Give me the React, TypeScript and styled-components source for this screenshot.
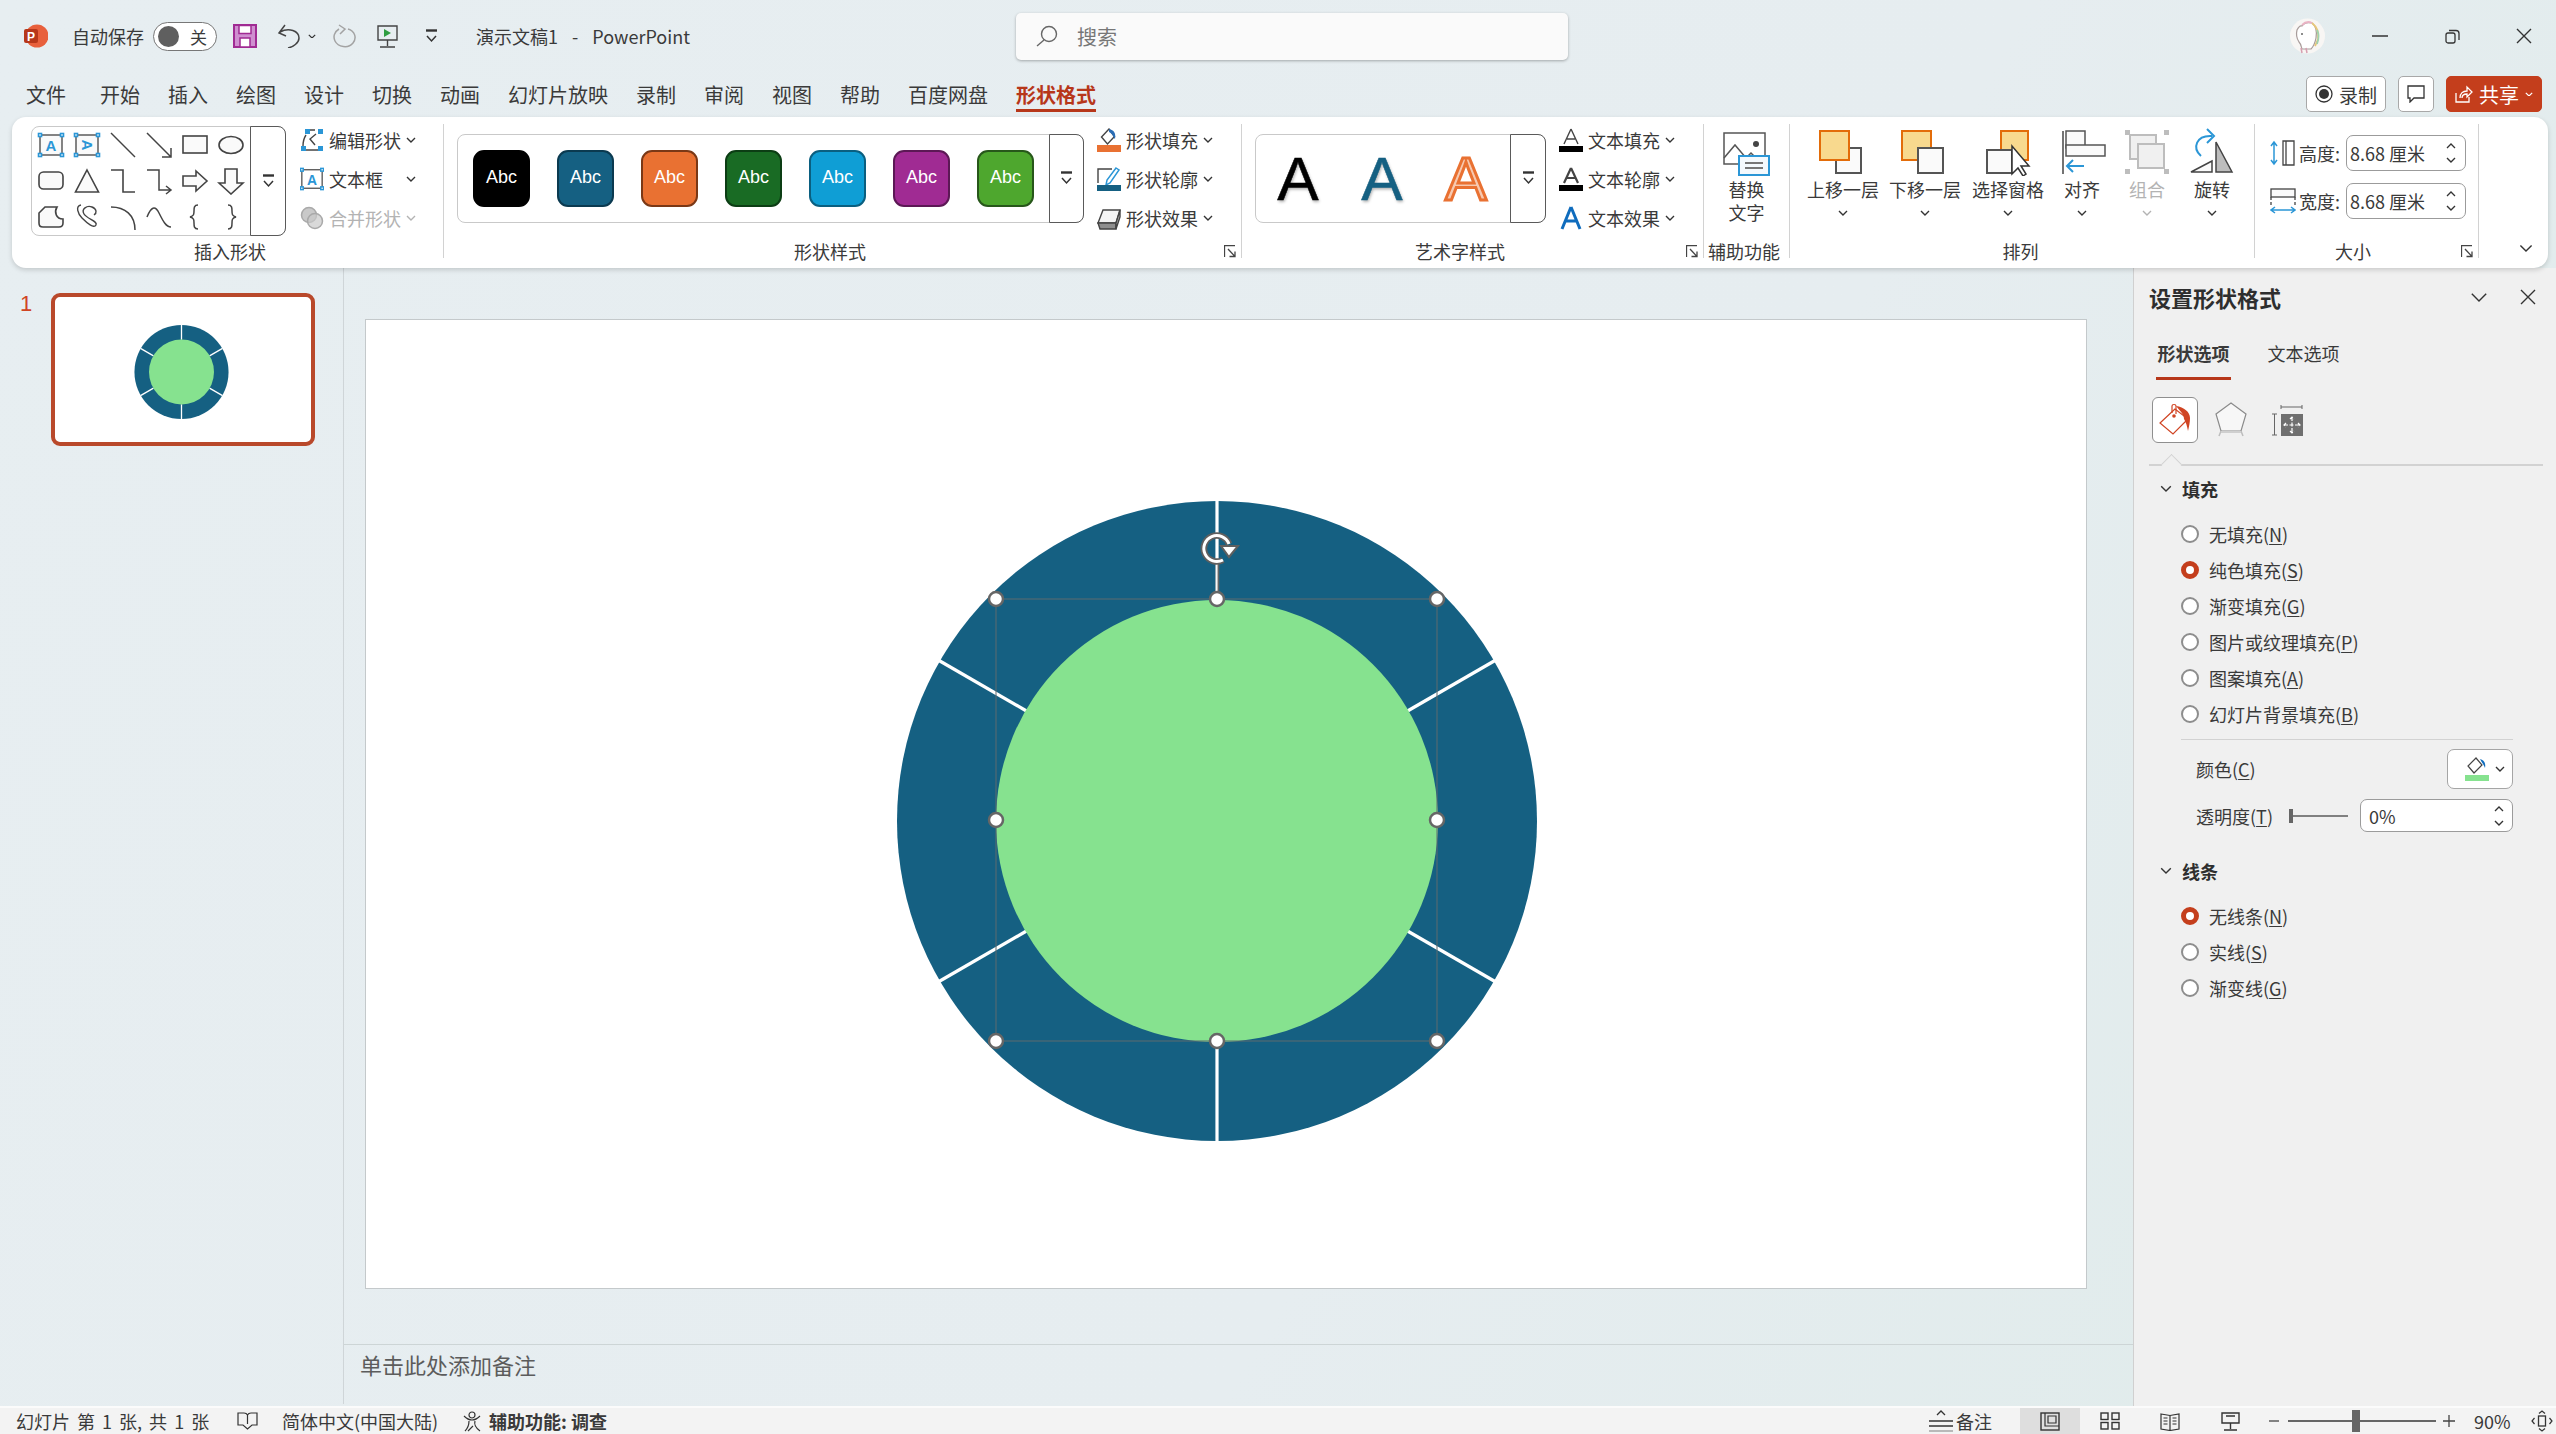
import React from 'react'
import styled, { createGlobalStyle } from 'styled-components'

const FONT = `"Noto Sans CJK SC", "Liberation Sans", sans-serif`
const INK = '#3a3a3a'
const RED = '#c43e1c'

const Global = createGlobalStyle`
  html, body { margin: 0; padding: 0; overflow: hidden; background: #e6edf0; }
  * { box-sizing: border-box; }
  svg { display: block; flex: none; }
`
const Root = styled.div`
  width: 2556px;
  height: 1434px;
  overflow: hidden;
  display: grid;
  grid-template-rows: 72px 45px 151px 1fr 28px;
  background: linear-gradient(120deg, #e7eef1 0%, #e6edf0 60%, #dfebea 100%);
  font-family: ${FONT};
  font-size: 18px;
  color: ${INK};
`

/* title bar */
const TitleBar = styled.div`
  display: grid;
  grid-template-columns: 1016px 552px 1fr;
  align-items: center;
`
const QuickBar = styled.div`
  display: flex;
  align-items: center;
  padding-left: 24px;
`
const Spot = styled.span<{ $ml?: number }>`
  display: flex;
  align-items: center;
  margin-left: ${p => p.$ml ?? 0}px;
  white-space: nowrap;
`
const DocTitle = styled.span`
  margin-left: 38px;
  white-space: pre;
  word-spacing: 3px;
`
const Toggle = styled.span`
  margin-left: 9px;
  width: 64px;
  height: 29px;
  border: 1px solid #777;
  border-radius: 15px;
  background: #fff;
  display: flex;
  align-items: center;
  justify-content: space-between;
  padding: 0 9px 0 4px;
  font-size: 17px;
  line-height: 1;
`
const Knob = styled.span`
  width: 21px;
  height: 21px;
  border-radius: 50%;
  background: #5f5f5f;
`
const SearchBox = styled.div`
  height: 47px;
  background: #fafafa;
  border-radius: 5px;
  box-shadow: 0 1px 3px rgba(0, 0, 0, 0.3);
  display: flex;
  align-items: center;
  gap: 19px;
  padding-left: 20px;
  font-size: 20px;
  color: #777;
`
const WindowBar = styled.div`
  display: flex;
  align-items: center;
  justify-content: flex-end;
  margin-right: -4px;
`
const Avatar = styled.span`
  margin-right: 18px;
`
const WinButton = styled.span`
  width: 72px;
  display: flex;
  justify-content: center;
`

/* tab row */
const TabRow = styled.div`
  display: flex;
  align-items: flex-start;
  gap: 28px;
  padding: 0 14px 0 26px;
`
const Tab = styled.span<{ $on?: boolean; $first?: boolean }>`
  padding-top: 8px;
  line-height: 29px;
  font-size: 20px;
  font-weight: ${p => (p.$on ? 700 : 400)};
  color: ${p => (p.$on ? '#b7371a' : INK)};
  border-bottom: 3px solid ${p => (p.$on ? '#b7371a' : 'transparent')};
  margin-right: ${p => (p.$first ? 6 : 0)}px;
`
const RightActions = styled.div`
  margin-left: auto;
  margin-top: 4px;
  display: flex;
  gap: 12px;
`
const ActionButton = styled.span<{ $w: number; $accent?: boolean }>`
  width: ${p => p.$w}px;
  height: 36px;
  display: flex;
  align-items: center;
  justify-content: center;
  gap: 6px;
  border-radius: 5px;
  border: 1px solid ${p => (p.$accent ? RED : '#a8a8a8')};
  background: ${p => (p.$accent ? RED : '#fff')};
  color: ${p => (p.$accent ? '#fff' : INK)};
  font-size: ${p => (p.$accent ? 20 : 19)}px;
`

/* ribbon */
const Ribbon = styled.div`
  margin: 0 8px 0 12px;
  height: 151px;
  background: #fff;
  border-radius: 14px;
  box-shadow: 0 2px 5px rgba(0, 0, 0, 0.16);
  display: flex;
  padding-top: 7px;
  position: relative;
  z-index: 2;
`
const Group = styled.div<{ $w: number }>`
  width: ${p => p.$w}px;
  display: flex;
  flex-direction: column;
`
const GroupBody = styled.div<{ $pl?: number; $pt?: number }>`
  height: 115px;
  display: flex;
  align-items: flex-start;
  padding: ${p => p.$pt ?? 0}px 0 0 ${p => p.$pl ?? 0}px;
`
const GroupFooter = styled.div`
  height: 24px;
  display: flex;
  align-items: center;
  padding-right: 5px;
`
const GroupLabel = styled.span<{ $pl?: number; $pr?: number }>`
  flex: 1;
  text-align: center;
  line-height: 24px;
  white-space: nowrap;
  padding: 0 ${p => p.$pr ?? 0}px 0 ${p => p.$pl ?? 0}px;
`
const GroupRule = styled.div`
  width: 1px;
  height: 134px;
  flex: none;
  background: #d2d2d2;
`
const Gallery = styled.div<{ $w: number; $h: number }>`
  width: ${p => p.$w}px;
  height: ${p => p.$h}px;
  flex: none;
  display: flex;
  border: 1px solid #c9c9c9;
  border-radius: 8px;
`
const GalleryItems = styled.div`
  flex: 1;
  display: flex;
  min-width: 0;
`
const ShapeGrid = styled.div`
  flex: 1;
  display: grid;
  grid-template-columns: repeat(6, 36px);
  grid-auto-rows: 36px;
  justify-items: center;
  align-items: center;
  align-content: center;
  padding-left: 1px;
`
const MoreColumn = styled.div<{ $w: number }>`
  width: ${p => p.$w}px;
  flex: none;
  display: flex;
  align-items: center;
  justify-content: center;
  border: 1px solid #5a5a5a;
  margin: -1px -1px -1px 0;
  border-radius: 0 8px 8px 0;
  background: #fff;
`
const SwatchRow = styled.div`
  display: flex;
  gap: 27px;
  padding: 15px 0 0 15px;
`
const Swatch = styled.div<{ $bg: string; $edge: string }>`
  width: 57px;
  height: 57px;
  border-radius: 11px;
  background: ${p => p.$bg};
  border: 2px solid ${p => p.$edge};
  display: flex;
  align-items: center;
  justify-content: center;
  color: #fff;
  font-family: 'Liberation Sans', sans-serif;
  font-size: 18px;
  padding-bottom: 2px;
`
const ArtCell = styled.div<{ $art: 'black' | 'blue' | 'orange' }>`
  width: 84px;
  height: 87px;
  display: flex;
  align-items: center;
  justify-content: center;
  font-family: 'Liberation Sans', sans-serif;
  font-size: 62px;
  line-height: 1;
  color: ${p => (p.$art === 'black' ? '#000' : p.$art === 'blue' ? '#156082' : '#f7c9b0')};
  text-shadow: ${p => (p.$art === 'orange' ? 'none' : '1px 2px 3px rgba(0,0,0,.3)')};
  -webkit-text-stroke: ${p => (p.$art === 'orange' ? '3px #e97132' : '0.5px currentColor')};
`
const SideColumn = styled.div<{ $ml: number; $mt: number }>`
  margin: ${p => p.$mt}px 0 0 ${p => p.$ml}px;
  display: flex;
  flex-direction: column;
  gap: 7px;
`
const SideRow = styled.div<{ $off?: boolean }>`
  height: 32px;
  display: flex;
  align-items: center;
  gap: 5px;
  color: ${p => (p.$off ? '#b3b3b3' : INK)};
  white-space: nowrap;
`
const SideLabel = styled.span`
  width: 72px;
`
const BigButton = styled.div<{ $w: number; $off?: boolean }>`
  width: ${p => p.$w}px;
  flex: none;
  display: flex;
  flex-direction: column;
  align-items: center;
  padding-top: 4px;
  color: ${p => (p.$off ? '#b3b3b3' : INK)};
`
const BigLabel = styled.span`
  margin-top: 2px;
  line-height: 23px;
  text-align: center;
  white-space: nowrap;
`
const BigChevron = styled.span`
  margin-top: 9px;
`
const SizeStack = styled.div`
  display: flex;
  flex-direction: column;
  gap: 12px;
  padding: 11px 0 0 15px;
`
const SizeRow = styled.div`
  height: 36px;
  display: flex;
  align-items: center;
`
const SizeLabel = styled.span`
  width: 50px;
  padding-left: 3px;
  white-space: nowrap;
`
const Spinner = styled.div<{ $w: number; $h: number; $ml?: number; $px?: number }>`
  width: ${p => p.$w}px;
  height: ${p => p.$h}px;
  margin-left: ${p => p.$ml ?? 0}px;
  flex: none;
  display: flex;
  align-items: center;
  justify-content: space-between;
  background: #fff;
  border: 1px solid #9b9b9b;
  border-radius: 7px;
  padding: 0 ${p => p.$px ?? 9}px 0 ${p => p.$px ?? 3}px;
  white-space: nowrap;
`
const SpinArrows = styled.span`
  display: flex;
  flex-direction: column;
  gap: 8px;
`
const CollapseSlot = styled.div`
  flex: 1;
  padding: 120px 0 0 40px;
`

/* main area */
const Main = styled.div`
  display: grid;
  grid-template-columns: 344px 1fr 423px;
  min-height: 0;
`
const ThumbPane = styled.div`
  border-right: 1px solid #cfd5d8;
  display: flex;
  align-items: flex-start;
  padding: 25px 0 0 20px;
  margin-bottom: 2px;
`
const ThumbNumber = styled.span`
  width: 31px;
  font-family: 'Liberation Sans', sans-serif;
  font-size: 22px;
  line-height: 22px;
  color: #d04423;
`
const Thumb = styled.div`
  width: 264px;
  height: 153px;
  border: 4px solid #b9492b;
  border-radius: 9px;
  background: #fff;
  overflow: hidden;
`
const Center = styled.div`
  display: flex;
  flex-direction: column;
  min-width: 0;
`
const SlideArea = styled.div`
  flex: 1;
  padding: 51px 0 0 21px;
`
const Slide = styled.div`
  width: 1722px;
  height: 970px;
  background: #fff;
  border: 1px solid #c4c9cb;
`
const NotesBar = styled.div`
  height: 62px;
  border-top: 1px solid #cdd5d6;
  padding: 5px 0 0 16px;
  font-size: 22px;
  line-height: 28px;
  color: #5c5c5c;
`

/* format panel */
const Panel = styled.div`
  background: #f0f0f0;
  border-left: 1px solid #d0d0d0;
  padding-left: 15px;
  margin-bottom: -2px;
`
const PanelHead = styled.div`
  height: 60px;
  display: flex;
  align-items: center;
  padding: 0 20px 2px 0;
  gap: 32px;
`
const PanelTitle = styled.span`
  font-size: 22px;
  font-weight: 700;
  color: #2e2e2e;
  margin-right: auto;
`
const PanelTabs = styled.div`
  height: 52px;
  display: flex;
  gap: 35px;
  padding-left: 7px;
`
const PanelTab = styled.span<{ $on?: boolean }>`
  width: 75px;
  text-align: center;
  line-height: 50px;
  height: 52px;
  white-space: nowrap;
  font-weight: ${p => (p.$on ? 700 : 400)};
  border-bottom: 3px solid ${p => (p.$on ? '#b7371a' : 'transparent')};
`
const PaneIcons = styled.div`
  display: flex;
  gap: 10px;
  margin: 17px 0 0 3px;
`
const PaneIcon = styled.span<{ $on?: boolean }>`
  width: 46px;
  height: 46px;
  display: flex;
  align-items: center;
  justify-content: center;
  border-radius: 6px;
  border: 1px solid ${p => (p.$on ? '#8f8f8f' : 'transparent')};
  background: ${p => (p.$on ? '#fff' : 'transparent')};
`
const PaneRule = styled.div`
  position: relative;
  width: 394px;
  height: 2px;
  margin-top: 21px;
  background: #d2d2d2;
  &::before {
    content: '';
    position: absolute;
    left: 15px;
    top: -7px;
    width: 14px;
    height: 14px;
    background: #f0f0f0;
    border-left: 1px solid #d2d2d2;
    border-top: 1px solid #d2d2d2;
    transform: rotate(45deg);
  }
`
const SectionHead = styled.div<{ $mt?: number }>`
  height: 46px;
  margin-top: ${p => p.$mt ?? 0}px;
  display: flex;
  align-items: center;
  gap: 10px;
  padding: 0 0 1px 11px;
  font-weight: 700;
  color: #2e2e2e;
`
const RadioList = styled.div`
  margin-top: 4px;
`
const RadioRow = styled.div`
  height: 36px;
  display: flex;
  align-items: center;
  gap: 10px;
  padding-left: 32px;
`
const Radio = styled.span<{ $on?: boolean }>`
  width: 18px;
  height: 18px;
  border-radius: 50%;
  background: #fff;
  border: ${p => (p.$on ? `5px solid ${RED}` : '2px solid #8d8d8d')};
`
const Key = styled.u`
  text-underline-offset: 2px;
`
const ThinRule = styled.div`
  width: 332px;
  height: 1px;
  margin: 7px 0 0 32px;
  background: #d2d2d2;
`
const PropRow = styled.div<{ $mt: number; $h: number }>`
  width: 364px;
  height: ${p => p.$h}px;
  margin-top: ${p => p.$mt}px;
  display: flex;
  align-items: center;
  padding-left: 47px;
`
const PropLabel = styled.span<{ $w?: number }>`
  width: ${p => (p.$w ? `${p.$w}px` : 'auto')};
  margin-right: auto;
  white-space: nowrap;
`
const ColorButton = styled.span`
  width: 66px;
  height: 40px;
  background: #fff;
  border: 1px solid #a5a5a5;
  border-radius: 7px;
  display: flex;
  align-items: center;
  justify-content: flex-end;
  gap: 6px;
  padding-right: 7px;
`

/* status bar */
const StatusBar = styled.div`
  display: flex;
  align-items: stretch;
  background: #f3f3f3;
  border-top: 2px solid #fbfbfb;
  padding: 0 2px 0 16px;
  position: relative;
  z-index: 1;
`
const Cell = styled.span<{ $w?: number; $ml?: number; $bold?: boolean; $on?: boolean; $center?: boolean; $wide?: boolean }>`
  width: ${p => (p.$w ? `${p.$w}px` : 'auto')};
  margin-left: ${p => (p.$ml === -1 ? 'auto' : `${p.$ml ?? 0}px`)};
  display: flex;
  align-items: center;
  justify-content: ${p => (p.$center ? 'center' : 'flex-start')};
  gap: 3px;
  font-weight: ${p => (p.$bold ? 700 : 400)};
  background: ${p => (p.$on ? '#dedede' : 'transparent')};
  white-space: nowrap;
  word-spacing: ${p => (p.$wide ? 3 : 0)}px;
  line-height: 1;
`
const ZoomTrack = styled.span`
  position: relative;
  width: 148px;
  height: 2px;
  background: #666;
  align-self: center;
  margin-left: 4px;
`
const ZoomThumb = styled.span`
  position: absolute;
  left: 64px;
  top: -10px;
  width: 8px;
  height: 22px;
  background: #666;
`

/* icons */
const S = '#444'
const BLUE = '#2b96d6'

const Chevron = ({ color = '#333', w = 10 }: { color?: string; w?: number }) => (
  <svg width={w} height={w * 0.6} viewBox="0 0 10 6">
    <path d="M1 1l4 4 4-4" fill="none" stroke={color} strokeWidth={Math.min(1.5, 14 / w)} />
  </svg>
)
const ChevronUp = () => (
  <svg width="10" height="6" viewBox="0 0 10 6">
    <path d="M1 5l4-4 4 4" fill="none" stroke="#333" strokeWidth="1.3" />
  </svg>
)
const MoreIcon = () => (
  <svg width="13" height="15" viewBox="0 0 13 15">
    <path d="M1 1.500h11" stroke="#333" strokeWidth="2.400" />
    <path d="M2 7l4.500 5L11 7" fill="none" stroke="#333" strokeWidth="1.500" />
  </svg>
)
const Launcher = () => (
  <svg width="12" height="13" viewBox="0 0 12 13">
    <path d="M.5 12V.5H11M4 4l7 7.500M11 6.500v5H5.500" fill="none" stroke="#444" strokeWidth="1.300" />
  </svg>
)
const Corners = ({ a = 3, b = 25, t = 4, d = 24 }: { a?: number; b?: number; t?: number; d?: number }) => (
  <g fill="#fff" stroke={BLUE} strokeWidth="1.600">
    <rect x={a - 1.5} y={t - 1.5} width="3" height="3" />
    <rect x={b - 1.5} y={t - 1.5} width="3" height="3" />
    <rect x={a - 1.5} y={d - 1.5} width="3" height="3" />
    <rect x={b - 1.5} y={d - 1.5} width="3" height="3" />
  </g>
)
const TextBoxIcon = () => (
  <svg width="28" height="28" viewBox="0 0 28 28">
    <rect x="3" y="4" width="22" height="20" fill="#fafafa" stroke={S} strokeWidth="1.300" />
    <Corners />
    <text x="14" y="20" textAnchor="middle" fontFamily="Liberation Sans" fontSize="15" fontWeight="700" fill={BLUE}>A</text>
  </svg>
)

const shapePaths: React.ReactNode[] = [
  <TextBoxIcon key="a" />,
  <svg key="b" width="28" height="28" viewBox="0 0 28 28">
    <rect x="3" y="4" width="22" height="20" fill="#fafafa" stroke={S} strokeWidth="1.300" />
    <Corners />
    <text x="14" y="-9" transform="rotate(90)" textAnchor="middle" fontFamily="Liberation Sans" fontSize="15" fontWeight="700" fill={BLUE}>A</text>
  </svg>,
  <svg key="c" width="28" height="28" viewBox="0 0 28 28"><path d="M2 2l24 24" stroke={S} strokeWidth="1.500" /></svg>,
  <svg key="d" width="28" height="28" viewBox="0 0 28 28"><path d="M2 2l24 24M26 17v9h-9" fill="none" stroke={S} strokeWidth="1.500" /></svg>,
  <svg key="e" width="28" height="28" viewBox="0 0 28 28"><rect x="2" y="5" width="24" height="17" fill="#fafafa" stroke={S} strokeWidth="1.600" /></svg>,
  <svg key="f" width="28" height="28" viewBox="0 0 28 28"><ellipse cx="14" cy="14" rx="12" ry="8.500" fill="#fafafa" stroke={S} strokeWidth="1.600" /></svg>,
  <svg key="g" width="28" height="28" viewBox="0 0 28 28"><rect x="2" y="5" width="24" height="17" rx="4.500" fill="#fafafa" stroke={S} strokeWidth="1.600" /></svg>,
  <svg key="h" width="28" height="28" viewBox="0 0 28 28"><path d="M14 3l11.500 22H2.500z" fill="#fafafa" stroke={S} strokeWidth="1.600" /></svg>,
  <svg key="i" width="28" height="28" viewBox="0 0 28 28"><path d="M2 3h12v22h12" fill="none" stroke={S} strokeWidth="1.600" /></svg>,
  <svg key="j" width="28" height="28" viewBox="0 0 28 28"><path d="M2 3h12v20h11M21 19l5 4-5 4" fill="none" stroke={S} strokeWidth="1.500" /></svg>,
  <svg key="k" width="28" height="28" viewBox="0 0 28 28"><path d="M2 9h13V4l11 10-11 10v-5H2z" fill="#fafafa" stroke={S} strokeWidth="1.600" /></svg>,
  <svg key="l" width="28" height="28" viewBox="0 0 28 28"><path d="M8 2h12v14h6L14 27 2 16h6z" fill="#fafafa" stroke={S} strokeWidth="1.600" /></svg>,
  <svg key="m" width="28" height="28" viewBox="0 0 28 28"><path d="M8 4h12c-3 5-1 12 6 12v4c0 3-1 4-4 4H6c-3 0-4-1-4-4V10z" fill="#fafafa" stroke={S} strokeWidth="1.600" /></svg>,
  <svg key="n" width="28" height="28" viewBox="0 0 28 28"><path d="M8 2C2 3 5 11 9 15c5 5 12 11 14 7s-9-6-12-11 3-9 8-7 5 6 2 8" fill="none" stroke={S} strokeWidth="1.400" /></svg>,
  <svg key="o" width="28" height="28" viewBox="0 0 28 28"><path d="M2 4c14 0 24 8 24 23" fill="none" stroke={S} strokeWidth="1.500" /></svg>,
  <svg key="p" width="28" height="28" viewBox="0 0 28 28"><path d="M2 14C6 4 10 2 14 10s7 14 12 14" fill="none" stroke={S} strokeWidth="1.500" /></svg>,
  <svg key="q" width="28" height="28" viewBox="0 0 28 28"><path d="M17 2c-4 0-4 3-4 6s0 5-4 6c4 1 4 3 4 6s0 6 4 6" fill="none" stroke={S} strokeWidth="1.500" /></svg>,
  <svg key="r" width="28" height="28" viewBox="0 0 28 28"><path d="M11 2c4 0 4 3 4 6s0 5 4 6c-4 1-4 3-4 6s0 6-4 6" fill="none" stroke={S} strokeWidth="1.500" /></svg>,
]

const EditShapeIcon = () => (
  <svg width="24" height="24" viewBox="0 0 24 24">
    <path d="M6 2h9M16 6l-6 5 5 6M3 18c0-5 1-8 3-11M5 22h14" fill="none" stroke={S} strokeWidth="1.400" />
    <g fill={BLUE}><rect x="1" y="18" width="5" height="5" /><rect x="18" y="18" width="5" height="5" /><rect x="18" y="1" width="5" height="5" /><rect x="5" y="1" width="5" height="5" /></g>
  </svg>
)
const MergeIcon = () => (
  <svg width="24" height="24" viewBox="0 0 24 24">
    <circle cx="9" cy="9" r="7.500" fill="#c9c9c9" stroke="#a9a9a9" strokeWidth="1.500" />
    <circle cx="15" cy="15" r="7.500" fill="#c9c9c9" fillOpacity=".7" stroke="#a9a9a9" strokeWidth="1.500" />
  </svg>
)
const FillIcon = ({ bar, accent = '#2a6db5' }: { bar: string; accent?: string }) => (
  <svg width="24" height="24" viewBox="0 0 24 24">
    <path d="M12 1l-7.500 8 6 7 7-7.500z" fill="#fff" stroke={S} strokeWidth="1.400" />
    <path d="M12 1c5 1 7 4 6 10-2-2-2-5-6-7z" fill={accent} />
    <rect x="0" y="17" width="24" height="7" fill={bar} />
  </svg>
)
const OutlineIcon = () => (
  <svg width="24" height="24" viewBox="0 0 24 24">
    <path d="M1 16V2h14" fill="none" stroke={S} strokeWidth="1.400" />
    <path d="M19 1l3 2-9 13-4 2 1-5z" fill="#fff" stroke={BLUE} strokeWidth="1.500" />
    <rect x="0" y="18" width="24" height="6" fill="#156082" />
  </svg>
)
const EffectIcon = () => (
  <svg width="24" height="24" viewBox="0 0 24 24">
    <path d="M6 4h17l-4 13H1z" fill="#f4f4f4" stroke={S} strokeWidth="1.400" />
    <path d="M1 17h18v6H3z" fill="#8f8f8f" stroke={S} strokeWidth="1.400" />
    <path d="M19 17l4-13v7l-4 12z" fill="#bdbdbd" stroke={S} strokeWidth="1.400" />
  </svg>
)
const LetterIcon = ({ mode }: { mode: 'fill' | 'line' | 'glow' }) => (
  <svg width="24" height="24" viewBox="0 0 24 24">
    {mode === 'glow' ? (
      <path d="M12 1L3 23M12 1l9 22M6 15h12" fill="none" stroke="#0f6cbd" strokeWidth="3" />
    ) : (
      <>
        <path d="M12 1L5 16M12 1l7 15M8 11h8" fill="none" stroke={S} strokeWidth={mode === 'line' ? 2.2 : 1.4} />
        <rect x="0" y="18" width="24" height="6" fill="#000" />
      </>
    )}
  </svg>
)
const AltTextIcon = () => (
  <svg width="48" height="44" viewBox="0 0 48 44">
    <rect x="1" y="1" width="41" height="31" fill="#fff" stroke="#555" strokeWidth="1.500" />
    <path d="M1 26l11-13 11 13 5-5 5 5" fill="none" stroke="#555" strokeWidth="1.500" />
    <circle cx="33" cy="12" r="3" fill="#444" />
    <rect x="16" y="24" width="30" height="19" fill="#f4f9fd" stroke={BLUE} strokeWidth="2" />
    <path d="M22 31h18M22 36h18" stroke="#777" strokeWidth="2" />
  </svg>
)
const LayerIcon = ({ kind }: { kind: 'up' | 'down' }) => (
  <svg width="48" height="48" viewBox="0 0 48 48">
    {kind === 'up' ? (
      <>
        <path d="M17 20h25v25H17z" fill="#fafafa" stroke="#555" strokeWidth="2" />
        <rect x="1" y="3" width="29" height="29" fill="#f8d98e" stroke="#e36c09" strokeWidth="2" />
      </>
    ) : (
      <>
        <rect x="1" y="3" width="29" height="29" fill="#f8d98e" stroke="#e36c09" strokeWidth="2" />
        <path d="M17 20h25v25H17z" fill="#fafafa" stroke="#555" strokeWidth="2" />
      </>
    )}
  </svg>
)
const PaneIconArt = () => (
  <svg width="48" height="48" viewBox="0 0 48 48">
    <rect x="17" y="3" width="27" height="29" fill="#f8d98e" stroke="#e36c09" strokeWidth="2" />
    <rect x="3" y="22" width="25" height="23" fill="#fafafa" stroke="#555" strokeWidth="2" />
    <path d="M28 18v28l6-6 5 8 3-2-5-8h8z" fill="#fff" stroke="#333" strokeWidth="1.500" />
  </svg>
)
const AlignIcon = () => (
  <svg width="48" height="48" viewBox="0 0 48 48">
    <path d="M5 3v43" stroke="#444" strokeWidth="1.500" />
    <rect x="8" y="3" width="19" height="17" fill="#fafafa" stroke="#555" strokeWidth="1.500" />
    <rect x="8" y="17" width="39" height="11" fill="#fafafa" stroke="#555" strokeWidth="1.500" />
    <path d="M26 38H9M15 32l-6 6 6 6" fill="none" stroke={BLUE} strokeWidth="2" />
  </svg>
)
const GroupIcon = () => (
  <svg width="48" height="48" viewBox="0 0 48 48">
    <rect x="7" y="7" width="26" height="24" fill="#f0f0f0" stroke="#bdbdbd" strokeWidth="2" />
    <rect x="15" y="16" width="26" height="24" fill="#f0f0f0" stroke="#bdbdbd" strokeWidth="2" />
    <g fill="#bdbdbd"><rect x="2" y="2" width="5" height="5" /><rect x="41" y="2" width="5" height="5" /><rect x="2" y="41" width="5" height="5" /><rect x="41" y="41" width="5" height="5" /></g>
  </svg>
)
const RotateIcon = () => (
  <svg width="48" height="48" viewBox="0 0 48 48">
    <path d="M24 33L3 44h21z" fill="#fafafa" stroke="#444" strokeWidth="1.500" />
    <path d="M28 14v30h16z" fill="#bdbdbd" stroke="#444" strokeWidth="1.500" />
    <path d="M13 28C4 20 8 7 24 8M19 1l7 7-7 7" fill="none" stroke={BLUE} strokeWidth="2" />
  </svg>
)
const HeightIcon = () => (
  <svg width="26" height="26" viewBox="0 0 26 26">
    <path d="M4 2v22M1 6l3-4 3 4M1 20l3 4 3-4" fill="none" stroke={BLUE} strokeWidth="1.500" />
    <path d="M16 1h-3v24h3M16 1h8v24h-8zM13 6v15" fill="#fff" stroke="#444" strokeWidth="1.300" />
  </svg>
)
const WidthIcon = () => (
  <svg width="26" height="26" viewBox="0 0 26 26">
    <rect x="1" y="1" width="24" height="8" fill="#fafafa" stroke="#444" strokeWidth="1.300" />
    <path d="M1 9v9M25 9v9" stroke="#444" strokeWidth="1.300" strokeDasharray="3 2" />
    <path d="M1 22h24M5 19l-4 3 4 3M21 19l4 3-4 3" fill="none" stroke={BLUE} strokeWidth="1.500" />
  </svg>
)

const spokes = [0, 60, 120, 180, 240, 300]
const Donut = ({ scale }: { scale: number }) => (
  <>
    <circle r={320 * scale} fill="#156082" />
    {spokes.map(a => (
      <line
        key={a}
        x1="0"
        y1={-220 * scale}
        x2="0"
        y2={-322 * scale}
        stroke="#fff"
        strokeWidth={scale < 1 ? 1.3 : 3.2}
        transform={`rotate(${a})`}
      />
    ))}
    <circle r={221 * scale} fill="#86e28f" />
  </>
)

const handles: [number, number][] = [
  [996, 599], [1217, 599], [1437, 599], [996, 820], [1437, 820], [996, 1041], [1217, 1041], [1437, 1041],
]

const SlideArt = () => (
  <svg width="1720" height="968" viewBox="366 320 1720 968">
    <g transform="translate(1217 821)"><Donut scale={1} /></g>
    <rect x="996" y="599" width="441" height="442" fill="none" stroke="#5f6a6e" strokeWidth="1" />
    <path d="M1217.500 560v39" stroke="#666" strokeWidth="3.500" />
    <path d="M1216.800 560v39" stroke="#fff" strokeWidth="1.500" />
    <path d="M1229 544A13 13 0 1 0 1223 560" fill="none" stroke="#5f5f5f" strokeWidth="6.500" />
    <path d="M1229 544A13 13 0 1 0 1223 560" fill="none" stroke="#fff" strokeWidth="3" />
    <path d="M1221 546h17l-9 11z" fill="#fff" stroke="#5f5f5f" strokeWidth="2" />
    {handles.map(([x, y]) => (
      <circle key={`${x}-${y}`} cx={x} cy={y} r="7" fill="#fff" stroke="#666" strokeWidth="2.500" />
    ))}
  </svg>
)

const tabs = ['开始', '插入', '绘图', '设计', '切换', '动画', '幻灯片放映', '录制', '审阅', '视图', '帮助', '百度网盘']
const swatches: [string, string][] = [
  ['#000000', '#000000'],
  ['#156082', '#0b3a50'],
  ['#e97132', '#7a3816'],
  ['#196b24', '#0c3d14'],
  ['#0f9ed5', '#0a5f80'],
  ['#a02b93', '#5c1855'],
  ['#4ea72e', '#27571a'],
]
const arrange = [
  { label: '上移一层', w: 82, icon: <LayerIcon kind="up" /> },
  { label: '下移一层', w: 82, icon: <LayerIcon kind="down" /> },
  { label: '选择窗格', w: 84, icon: <PaneIconArt /> },
  { label: '对齐', w: 64, icon: <AlignIcon /> },
  { label: '组合', w: 66, icon: <GroupIcon />, off: true },
  { label: '旋转', w: 64, icon: <RotateIcon /> },
]
const fills: [string, string, boolean][] = [
  ['无填充', 'N', false],
  ['纯色填充', 'S', true],
  ['渐变填充', 'G', false],
  ['图片或纹理填充', 'P', false],
  ['图案填充', 'A', false],
  ['幻灯片背景填充', 'B', false],
]
const lines: [string, string, boolean][] = [
  ['无线条', 'N', true],
  ['实线', 'S', false],
  ['渐变线', 'G', false],
]

const RadioItem = ({ text, k, on }: { text: string; k: string; on: boolean }) => (
  <RadioRow>
    <Radio $on={on} />
    <span>
      {text}(<Key>{k}</Key>)
    </span>
  </RadioRow>
)

const SizeSpinner = () => (
  <Spinner $w={120} $h={36}>
    8.68 厘米
    <SpinArrows>
      <ChevronUp />
      <Chevron w={10} />
    </SpinArrows>
  </Spinner>
)

export default function App() {
  return (
    <Root>
      <Global />

      <TitleBar>
        <QuickBar>
          <svg width="24" height="24" viewBox="0 0 24 24">
            <circle cx="13" cy="12" r="11.500" fill="#e8603c" />
            <rect x="0" y="5" width="14" height="14" rx="2" fill="#b7371a" />
            <text x="7" y="16.500" textAnchor="middle" fontFamily="Liberation Sans" fontSize="12" fontWeight="700" fill="#fff">P</text>
          </svg>
          <Spot $ml={24}>自动保存</Spot>
          <Toggle>
            <Knob />关
          </Toggle>
          <Spot $ml={16}>
            <svg width="24" height="24" viewBox="0 0 24 24">
              <path d="M1 1h22v22H1z" fill="#cf8fd0" stroke="#a02b93" strokeWidth="2" />
              <rect x="6" y="1.500" width="12" height="8" fill="#fff" stroke="#a02b93" strokeWidth="1.500" />
              <rect x="7" y="14" width="10" height="9" fill="#fff" stroke="#a02b93" strokeWidth="1.500" />
            </svg>
          </Spot>
          <Spot $ml={20}>
            <svg width="24" height="24" viewBox="0 0 24 24">
              <path d="M8 1L2 9l7 3M3 8c9-5 19-1 19 6 0 5-6 9-11 10" fill="none" stroke="#444" strokeWidth="1.500" />
            </svg>
          </Spot>
          <Spot $ml={7}><Chevron w={8} /></Spot>
          <Spot $ml={16}>
            <svg width="25" height="24" viewBox="0 0 25 24">
              <path d="M7 1l6 4-5 5" fill="none" stroke="#a3a3a3" strokeWidth="1.500" />
              <path d="M7 5C2 8 1 13 3 17c3 6 13 8 18 2 4-5 2-12-5-14" fill="none" stroke="#a3a3a3" strokeWidth="1.500" />
            </svg>
          </Spot>
          <Spot $ml={20}>
            <svg width="21" height="24" viewBox="0 0 21 24">
              <path d="M1 2h19v14H1zM10.500 16v6M3 23h15" fill="none" stroke="#444" strokeWidth="1.400" />
              <path d="M7 5l7 4-7 4z" fill="#2e9e41" />
            </svg>
          </Spot>
          <Spot $ml={27}><MoreIcon /></Spot>
          <DocTitle>演示文稿1  -  PowerPoint</DocTitle>
        </QuickBar>
        <SearchBox>
          <svg width="22" height="22" viewBox="0 0 22 22">
            <circle cx="13" cy="9" r="7.500" fill="none" stroke="#666" strokeWidth="1.400" />
            <path d="M8 15l-7 6" stroke="#666" strokeWidth="1.400" />
          </svg>
          搜索
        </SearchBox>
        <WindowBar>
          <Avatar>
            <svg width="37" height="36" viewBox="0 0 37 36">
              <circle cx="18.500" cy="18" r="17.500" fill="#f8f6f4" />
              <path d="M8 12c1-2 3-5 5-4 2-3 6-4 10-3 4 3 5 9 4 15-1 5-3 9-5 11h-9c-1-3-1-5-3-7-2-3-3-8-2-12z" fill="#fff" stroke="#a89c9a" strokeWidth="1.200" />
              <path d="M23 5c5 4 7 10 6 16-1 3-2 5-3 7" fill="none" stroke="#e8c77a" strokeWidth="1.800" />
              <path d="M28 12c2 4 2 9 0 14" fill="none" stroke="#9ed3b0" strokeWidth="1.800" />
              <path d="M13 7c2-2 6-4 10-2" fill="none" stroke="#eab3c4" strokeWidth="1.800" />
              <path d="M12 30l1 5M17 30l1 5" stroke="#d79fb0" strokeWidth="1.500" />
              <circle cx="13" cy="16" r="1" fill="#666" />
            </svg>
          </Avatar>
          <WinButton>
            <svg width="16" height="2" viewBox="0 0 16 2"><path d="M0 1h16" stroke="#333" strokeWidth="1.500" /></svg>
          </WinButton>
          <WinButton>
            <svg width="15" height="15" viewBox="0 0 15 15">
              <rect x="1" y="4" width="9" height="10" rx="2" fill="none" stroke="#333" strokeWidth="1.300" />
              <path d="M4 1.500h7c2 0 3 1 3 3V11" fill="none" stroke="#333" strokeWidth="1.300" />
            </svg>
          </WinButton>
          <WinButton>
            <svg width="16" height="16" viewBox="0 0 16 16"><path d="M1 1l14 14M15 1L1 15" stroke="#333" strokeWidth="1.400" /></svg>
          </WinButton>
        </WindowBar>
      </TitleBar>

      <TabRow>
        <Tab $first>文件</Tab>
        {tabs.map(t => (
          <Tab key={t}>{t}</Tab>
        ))}
        <Tab $on>形状格式</Tab>
        <RightActions>
          <ActionButton $w={80}>
            <svg width="18" height="18" viewBox="0 0 18 18">
              <circle cx="9" cy="9" r="8" fill="none" stroke="#333" strokeWidth="1.300" />
              <circle cx="9" cy="9" r="5" fill="#333" />
            </svg>
            录制
          </ActionButton>
          <ActionButton $w={36}>
            <svg width="18" height="18" viewBox="0 0 18 18">
              <path d="M1 1h16v12H7l-4 4v-4H1z" fill="none" stroke="#333" strokeWidth="1.300" />
            </svg>
          </ActionButton>
          <ActionButton $w={96} $accent>
            <svg width="18" height="18" viewBox="0 0 18 18">
              <path d="M1 8v9h13v-5M5 13c0-5 3-7 7-7V2l5 5-5 5V9c-3 0-5 1-5 4" fill="none" stroke="#fff" strokeWidth="1.300" />
            </svg>
            共享
            <Chevron color="#fff" w={8} />
          </ActionButton>
        </RightActions>
      </TabRow>

      <Ribbon>
        <Group $w={431}>
          <GroupBody $pl={19} $pt={2}>
            <Gallery $w={255} $h={110}>
              <ShapeGrid>{shapePaths}</ShapeGrid>
              <MoreColumn $w={36}><MoreIcon /></MoreColumn>
            </Gallery>
            <SideColumn $ml={14} $mt={-2}>
              <SideRow><EditShapeIcon /><SideLabel>编辑形状</SideLabel><Chevron /></SideRow>
              <SideRow><svg width="24" height="24" viewBox="1 1 26 26"><rect x="3" y="4" width="22" height="20" fill="#fff" stroke={S} strokeWidth="1.300" /><Corners /><text x="14" y="20" textAnchor="middle" fontFamily="Liberation Sans" fontSize="15" fontWeight="700" fill={BLUE}>A</text></svg><SideLabel>文本框</SideLabel><Chevron /></SideRow>
              <SideRow $off><MergeIcon /><SideLabel>合并形状</SideLabel><Chevron color="#b3b3b3" /></SideRow>
            </SideColumn>
          </GroupBody>
          <GroupFooter><GroupLabel $pl={10}>插入形状</GroupLabel></GroupFooter>
        </Group>
        <GroupRule />

        <Group $w={797}>
          <GroupBody $pl={13} $pt={10}>
            <Gallery $w={627} $h={89}>
              <GalleryItems>
                <SwatchRow>
                  {swatches.map(([bg, edge]) => (
                    <Swatch key={bg} $bg={bg} $edge={edge}>Abc</Swatch>
                  ))}
                </SwatchRow>
              </GalleryItems>
              <MoreColumn $w={35}><MoreIcon /></MoreColumn>
            </Gallery>
            <SideColumn $ml={13} $mt={-10}>
              <SideRow><FillIcon bar="#e97132" /><SideLabel>形状填充</SideLabel><Chevron /></SideRow>
              <SideRow><OutlineIcon /><SideLabel>形状轮廓</SideLabel><Chevron /></SideRow>
              <SideRow><EffectIcon /><SideLabel>形状效果</SideLabel><Chevron /></SideRow>
            </SideColumn>
          </GroupBody>
          <GroupFooter><GroupLabel $pr={8}>形状样式</GroupLabel><Launcher /></GroupFooter>
        </Group>
        <GroupRule />

        <Group $w={461}>
          <GroupBody $pl={13} $pt={10}>
            <Gallery $w={291} $h={89}>
              <GalleryItems>
                <ArtCell $art="black">A</ArtCell>
                <ArtCell $art="blue">A</ArtCell>
                <ArtCell $art="orange">A</ArtCell>
              </GalleryItems>
              <MoreColumn $w={36}><MoreIcon /></MoreColumn>
            </Gallery>
            <SideColumn $ml={13} $mt={-10}>
              <SideRow><LetterIcon mode="fill" /><SideLabel>文本填充</SideLabel><Chevron /></SideRow>
              <SideRow><LetterIcon mode="line" /><SideLabel>文本轮廓</SideLabel><Chevron /></SideRow>
              <SideRow><LetterIcon mode="glow" /><SideLabel>文本效果</SideLabel><Chevron /></SideRow>
            </SideColumn>
          </GroupBody>
          <GroupFooter><GroupLabel $pr={8}>艺术字样式</GroupLabel><Launcher /></GroupFooter>
        </Group>
        <GroupRule />

        <Group $w={85}>
          <GroupBody $pt={4}>
            <BigButton $w={85}>
              <AltTextIcon />
              <BigLabel>替换<br />文字</BigLabel>
            </BigButton>
          </GroupBody>
          <GroupFooter><GroupLabel>辅助功能</GroupLabel></GroupFooter>
        </Group>
        <GroupRule />

        <Group $w={464}>
          <GroupBody $pl={12}>
            {arrange.map(b => (
              <BigButton key={b.label} $w={b.w} $off={b.off}>
                {b.icon}
                <BigLabel>{b.label}</BigLabel>
                <BigChevron><Chevron color={b.off ? '#b3b3b3' : '#333'} /></BigChevron>
              </BigButton>
            ))}
          </GroupBody>
          <GroupFooter><GroupLabel $pl={2}>排列</GroupLabel></GroupFooter>
        </Group>
        <GroupRule />

        <Group $w={223}>
          <GroupBody>
            <SizeStack>
              <SizeRow><HeightIcon /><SizeLabel>高度:</SizeLabel><SizeSpinner /></SizeRow>
              <SizeRow><WidthIcon /><SizeLabel>宽度:</SizeLabel><SizeSpinner /></SizeRow>
            </SizeStack>
          </GroupBody>
          <GroupFooter><GroupLabel $pr={10}>大小</GroupLabel><Launcher /></GroupFooter>
        </Group>
        <GroupRule />

        <CollapseSlot><Chevron w={14} /></CollapseSlot>
      </Ribbon>

      <Main>
        <ThumbPane>
          <ThumbNumber>1</ThumbNumber>
          <Thumb>
            <svg width="256" height="145" viewBox="0 0 256 145">
              <g transform="translate(126.500 75)"><Donut scale={0.147} /></g>
            </svg>
          </Thumb>
        </ThumbPane>

        <Center>
          <SlideArea>
            <Slide><SlideArt /></Slide>
          </SlideArea>
          <NotesBar>单击此处添加备注</NotesBar>
        </Center>

        <Panel>
          <PanelHead>
            <PanelTitle>设置形状格式</PanelTitle>
            <Chevron w={18} />
            <svg width="16" height="16" viewBox="0 0 16 16"><path d="M1 1l14 14M15 1L1 15" stroke="#333" strokeWidth="1.400" /></svg>
          </PanelHead>
          <PanelTabs>
            <PanelTab $on>形状选项</PanelTab>
            <PanelTab>文本选项</PanelTab>
          </PanelTabs>
          <PaneIcons>
            <PaneIcon $on>
              <svg width="34" height="34" viewBox="0 0 34 34">
                <path d="M17 6L2 20l13 11 15-15z" fill="none" stroke="#d04423" strokeWidth="1.200" />
                <path d="M14 10V3c0-2 4-2 4 0v8" fill="none" stroke="#d04423" strokeWidth="1.200" />
                <circle cx="16" cy="13" r="1.800" fill="#d04423" />
                <path d="M18 3c8 1 14 6 14 12 0 4-1 9-2 13-1-5-2-9-4-12 0-5-4-8-8-13z" fill="#d04423" />
              </svg>
            </PaneIcon>
            <PaneIcon>
              <svg width="32" height="36" viewBox="0 0 32 36">
                <path d="M16 1l15 11-5 17H6L1 12z" fill="#f7f7f7" stroke="#8a8a8a" strokeWidth="1.200" />
                <path d="M6 29l-2 5M26 29l2 5" stroke="#bdbdbd" strokeWidth="1.500" />
                <path d="M6 30h20" stroke="#cfcfcf" strokeWidth="2" />
              </svg>
            </PaneIcon>
            <PaneIcon>
              <svg width="32" height="32" viewBox="0 0 32 32">
                <path d="M10 1v4M31 1v4M10 3h21M1 10h5M1 31h5M3.500 10v21" fill="none" stroke="#666" strokeWidth="1" />
                <rect x="10" y="10" width="22" height="22" fill="#6f6f6f" />
                <path d="M21 13v16M13 21h16M19 15l2-2 2 2M19 27l2 2 2-2M15 19l-2 2 2 2M27 19l2 2-2 2" fill="none" stroke="#fff" strokeWidth="1.200" strokeDasharray="4 1.500" />
              </svg>
            </PaneIcon>
          </PaneIcons>
          <PaneRule />

          <SectionHead><Chevron w={12} />填充</SectionHead>
          <RadioList>
            {fills.map(([t, k, on]) => (
              <RadioItem key={t} text={t} k={k} on={on} />
            ))}
          </RadioList>
          <ThinRule />
          <PropRow $mt={9} $h={40}>
            <PropLabel>颜色(<Key>C</Key>)</PropLabel>
            <ColorButton>
              <svg width="24" height="26" viewBox="0 0 24 26">
                <path d="M11 2L3 10l6 7 8-8z" fill="#fff" stroke="#444" strokeWidth="1.200" />
                <path d="M15 3c4 1 6 4 5 9-1-3-3-5-5-9z" fill="#0f6cbd" />
                <rect x="0" y="19" width="24" height="6" fill="#86e28f" />
              </svg>
              <Chevron />
            </ColorButton>
          </PropRow>
          <PropRow $mt={10} $h={33}>
            <PropLabel $w={93}>透明度(<Key>T</Key>)</PropLabel>
            <svg width="59" height="14" viewBox="0 0 59 14">
              <rect x="0" y="0" width="4" height="14" fill="#666" />
              <rect x="4" y="6" width="55" height="2" fill="#808080" />
            </svg>
            <Spinner $w={153} $h={33} $ml={12} $px={8}>
              0%
              <SpinArrows>
                <ChevronUp />
                <Chevron />
              </SpinArrows>
            </Spinner>
          </PropRow>

          <SectionHead $mt={16}><Chevron w={12} />线条</SectionHead>
          <RadioList>
            {lines.map(([t, k, on]) => (
              <RadioItem key={t} text={t} k={k} on={on} />
            ))}
          </RadioList>
        </Panel>
      </Main>

      <StatusBar>
        <Cell $w={221} $wide>幻灯片 第 1 张, 共 1 张</Cell>
        <Cell $w={45}>
          <svg width="21" height="18" viewBox="0 0 21 18">
            <path d="M1 1h6c2 0 3 1 3.500 2C11 2 12 1 14 1h6v12h-5l-4.500 4L6 13H1zM10.500 3v9" fill="none" stroke="#333" strokeWidth="1.200" />
          </svg>
        </Cell>
        <Cell $w={180}>简体中文(中国大陆)</Cell>
        <Cell $w={27}>
          <svg width="20" height="21" viewBox="0 0 20 21">
            <circle cx="10" cy="4" r="3" fill="none" stroke="#333" strokeWidth="1.200" />
            <path d="M2 5c3 3 5 4 8 4s5-1 8-4M7 10c0 3-1 7-4 10M13 10c-1 3 1 7 5 10M11 15l-5 5" fill="none" stroke="#333" strokeWidth="1.200" />
          </svg>
        </Cell>
        <Cell $bold>辅助功能: 调查</Cell>

        <Cell $ml={-1} $w={91}>
          <svg width="24" height="22" viewBox="0 0 24 22">
            <path d="M8 5l4-4 4 4M0 11h24M0 16h24" fill="none" stroke="#333" strokeWidth="1.300" />
            <path d="M0 21h24" stroke="#999" strokeWidth="1.300" />
          </svg>
          备注
        </Cell>
        <Cell $w={60} $on $center>
          <svg width="20" height="19" viewBox="0 0 20 19">
            <rect x="1" y="1" width="18" height="17" fill="none" stroke="#333" strokeWidth="1.400" />
            <path d="M5 1v13h14M8 4h8v7H8z" fill="none" stroke="#333" strokeWidth="1.200" />
          </svg>
        </Cell>
        <Cell $w={60} $center>
          <svg width="20" height="18" viewBox="0 0 20 18">
            <g fill="none" stroke="#333" strokeWidth="1.400"><rect x="1" y="1" width="7" height="6.500" /><rect x="12" y="1" width="7" height="6.500" /><rect x="1" y="10.500" width="7" height="6.500" /><rect x="12" y="10.500" width="7" height="6.500" /></g>
          </svg>
        </Cell>
        <Cell $w={60} $center>
          <svg width="20" height="19" viewBox="0 0 20 19">
            <path d="M1 2l9 1.500L19 2v15l-9 1.500L1 17zM10 3.500v15M3.500 6h4M3.500 9h4M3.500 12h4M12.500 6h4M12.500 9h4M12.500 12h4" fill="none" stroke="#333" strokeWidth="1.200" />
          </svg>
        </Cell>
        <Cell $w={60} $center>
          <svg width="19" height="20" viewBox="0 0 19 20">
            <path d="M1 2h17v10H1zM9.500 12v6M3 19h13M5 5h9" fill="none" stroke="#333" strokeWidth="1.400" />
          </svg>
        </Cell>
        <Cell $w={20} $ml={4} $center>
          <svg width="10" height="2" viewBox="0 0 10 2"><path d="M0 1h10" stroke="#444" strokeWidth="1.300" /></svg>
        </Cell>
        <ZoomTrack><ZoomThumb /></ZoomTrack>
        <Cell $w={18} $ml={4} $center>
          <svg width="12" height="12" viewBox="0 0 12 12"><path d="M0 6h12M6 0v12" stroke="#444" strokeWidth="1.300" /></svg>
        </Cell>
        <Cell $ml={16} $w={38}>90%</Cell>
        <Cell $ml={18} $w={24} $center>
          <svg width="22" height="22" viewBox="0 0 22 22">
            <rect x="7.500" y="6" width="7" height="10" fill="none" stroke="#333" strokeWidth="1.300" />
            <path d="M8 3.500L11 1l3 2.500M8 18.500l3 2.500 3-2.500M3.500 8L1 11l2.500 3M18.500 8L21 11l-2.500 3" fill="none" stroke="#333" strokeWidth="1.200" />
          </svg>
        </Cell>
      </StatusBar>
    </Root>
  )
}
